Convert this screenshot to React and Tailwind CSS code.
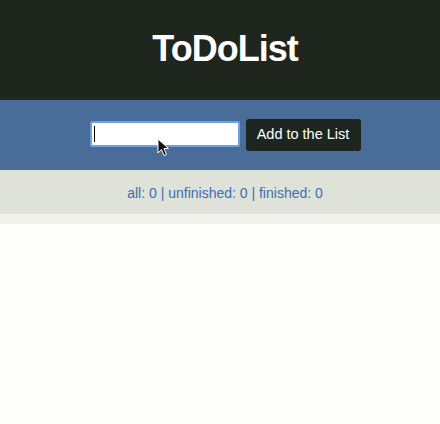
export default function App() {
  return (
    <div className="min-h-screen flex flex-col bg-[#fefefa]" style={{ fontFamily: '"Liberation Sans", Arial, sans-serif' }}>
      {/* Cabecera */}
      <div className="h-[100px] bg-[#1e261d] flex items-center justify-center pl-[10px]">
        <h1 className="text-[36px] font-bold text-white leading-none tracking-[-1px] -mt-[3px]">ToDoList</h1>
      </div>

      {/* Formulario */}
      <div className="h-[70px] bg-[#4a6c98] flex items-center justify-center gap-[6px] pl-[10px] relative">
        <div className="w-[150px] h-[26px] bg-white border-2 border-[#6ea0e6] rounded-[2px] flex items-center px-[2px] -mt-[3px]">
          <div className="w-px h-[16px] bg-black"></div>
        </div>
        <button className="h-[32px] w-[115px] bg-[#1c261f] text-white text-[14.5px] rounded-[3px]">
          Add to the List
        </button>
        <svg className="absolute left-[157px] top-[38px]" width="13" height="20" viewBox="0 0 13 20">
          <path d="M1 1 L1 15 L4.5 11.5 L7 17.5 L9.5 16.5 L7 10.5 L11.5 10.5 Z" fill="#111" stroke="#fff" strokeWidth="1" />
        </svg>
      </div>

      {/* Contadores */}
      <div className="h-[44px] bg-[#dfe2d8] flex items-start justify-center pt-[16px] pl-[10px]">
        <p className="text-[14px] text-[#3b6fb0] leading-none">
          all: 0 | unfinished: 0 | finished: 0
        </p>
      </div>
      <div className="h-[10px] bg-[#f2f2ec]"></div>
    </div>
  )
}
